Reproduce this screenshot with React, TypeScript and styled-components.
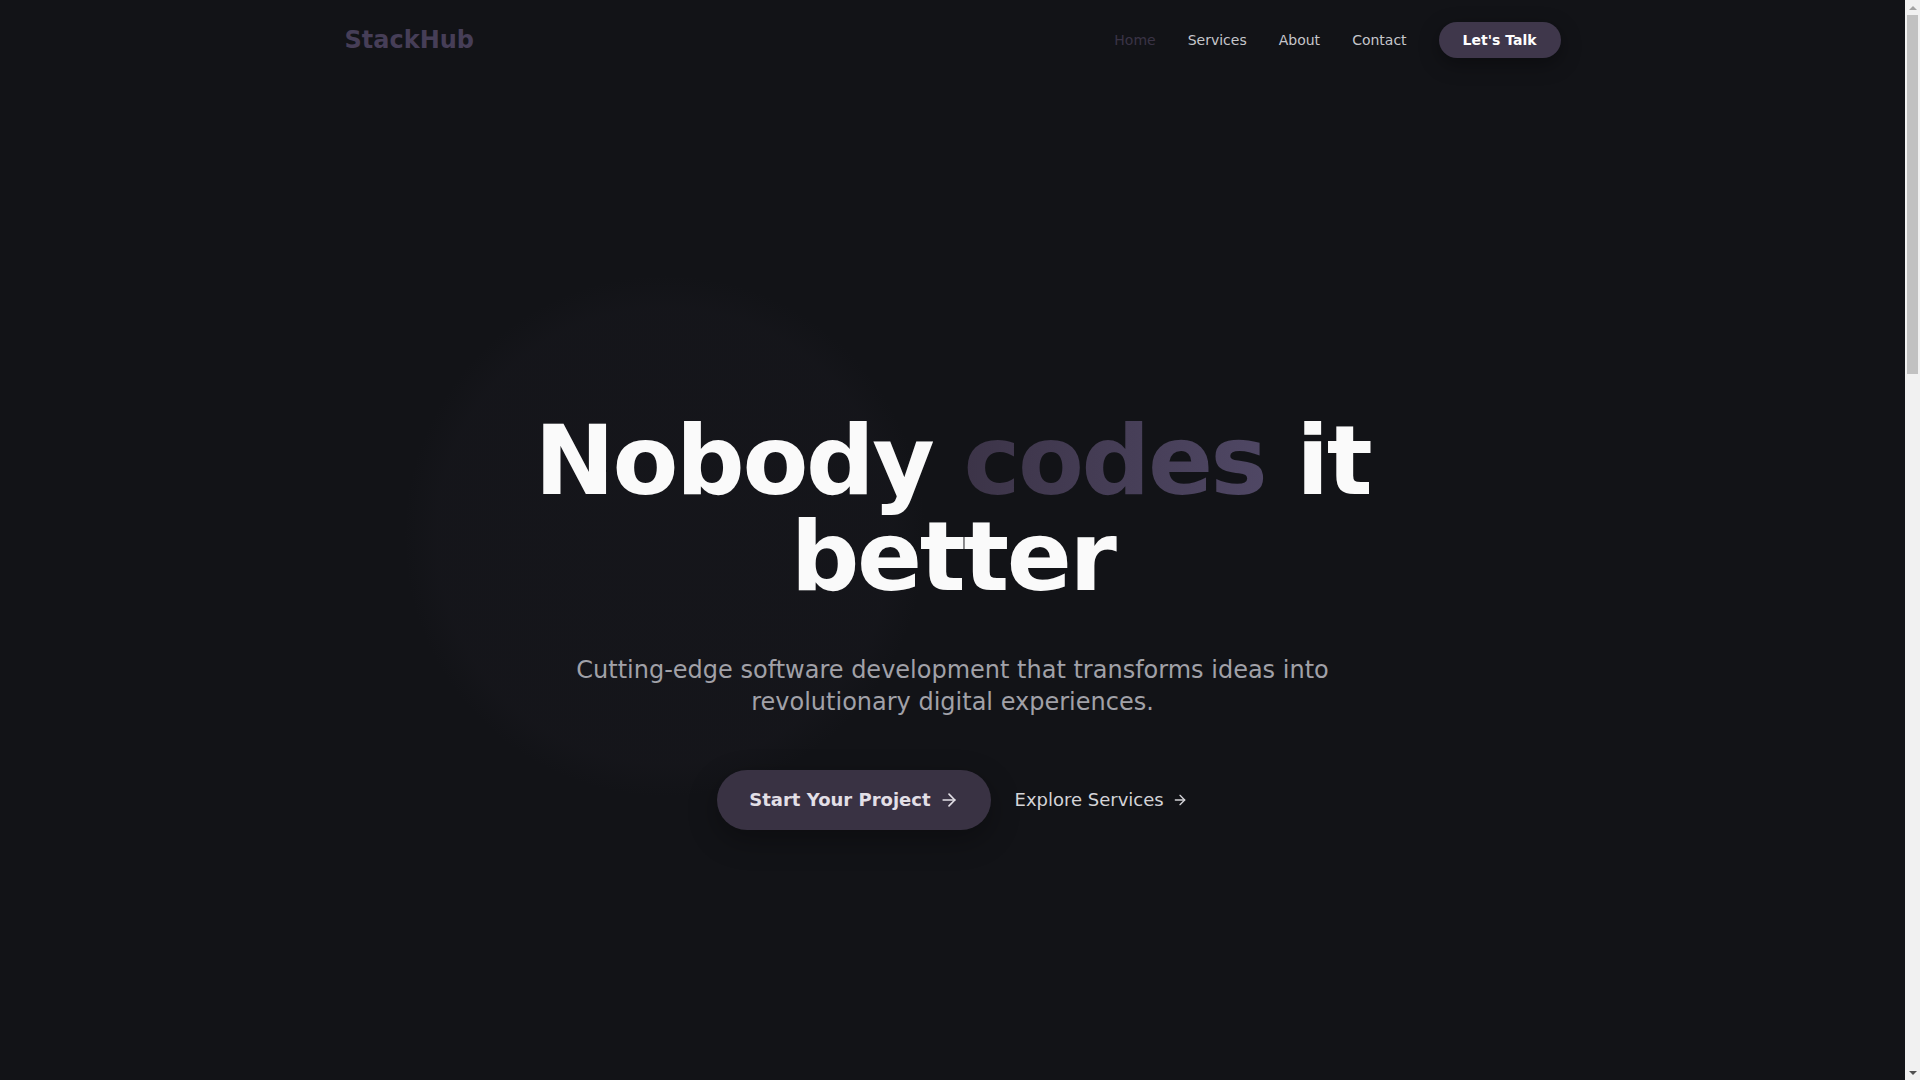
import { createGlobalStyle, styled } from 'styled-components'
import { ArrowRight, Code2, Smartphone, Cloud, Shield, Cpu, Layers } from 'lucide-react'

const GlobalStyle = createGlobalStyle`
  * { box-sizing: border-box; }
  html, body {
    margin: 0;
    padding: 0;
    background: #121317;
    color: #fafafa;
    font-family: "DejaVu Sans", Verdana, sans-serif;
  }
  a { color: inherit; text-decoration: none; }
  h1, h2, h3, p { margin: 0; }
`

const Shell = styled.div`
  display: flex;
  height: 100vh;
  overflow: hidden;
`

const Page = styled.main`
  flex: 1;
  min-width: 0;
  overflow-y: auto;
  background: #121317;
  scrollbar-width: none;
  &::-webkit-scrollbar { display: none; }
`

/* classic scrollbar rail, as the page shows it */
const Rail = styled.div`
  width: 15px;
  flex-shrink: 0;
  background: #f1f1f1;
  display: flex;
  flex-direction: column;
`

const RailButton = styled.div<{ $down?: boolean }>`
  height: 15px;
  display: flex;
  align-items: center;
  justify-content: center;
  &::after {
    content: '';
    width: 0;
    height: 0;
    border-left: 4px solid transparent;
    border-right: 4px solid transparent;
    ${({ $down }) =>
      $down ? 'border-top: 4px solid #505050;' : 'border-bottom: 4px solid #a3a3a3;'}
  }
`

const RailTrack = styled.div`
  flex: 1;
  padding: 0 2px;
`

const RailThumb = styled.div`
  height: 359px;
  background: #c1c1c1;
`

const Container = styled.div`
  max-width: 1280px;
  margin-inline: auto;
  padding: 0 2rem;
`

const NavBar = styled.nav`
  height: 80px;
  position: relative;
  z-index: 2;
  & > ${Container} {
    height: 100%;
    display: flex;
    justify-content: space-between;
    align-items: center;
  }
`

const Logo = styled.a`
  font-size: 24px;
  font-weight: 700;
  color: #463e57;
`

const NavLinks = styled.ul`
  display: flex;
  align-items: center;
  gap: 2rem;
  list-style: none;
  margin: 0;
  padding: 0;
`

const NavLink = styled.a<{ $active?: boolean }>`
  font-size: 14px;
  line-height: 20px;
  color: ${({ $active }) => ($active ? '#3a3346' : '#c6c6cb')};
`

const TalkButton = styled.a`
  display: inline-block;
  padding: 8px 24px;
  border-radius: 9999px;
  background: #3f374b;
  color: #ffffff;
  font-size: 14px;
  line-height: 20px;
  font-weight: 700;
  box-shadow: 0 6px 20px rgba(0, 0, 0, 0.35);
`

const Hero = styled.section`
  position: relative;
  min-height: 1080px;
  display: flex;
  align-items: center;
  justify-content: center;
  overflow: hidden;
`

const Glow = styled.div`
  position: absolute;
  left: 405px;
  top: 196px;
  width: 520px;
  height: 520px;
  border-radius: 50%;
  background: radial-gradient(circle, rgba(70, 62, 84, 0.06) 0%, rgba(70, 62, 84, 0.05) 62%, rgba(70, 62, 84, 0) 71%);
  pointer-events: none;
`

const HeroContent = styled.div`
  position: relative;
  display: flex;
  flex-direction: column;
  align-items: center;
  text-align: center;
  margin-top: 3px;
`

const Title = styled.h1`
  max-width: 1024px;
  font-size: 96px;
  line-height: 1;
  font-weight: 700;
  letter-spacing: -0.025em;
  color: #fafafa;
`

const Accent = styled.span`
  background: linear-gradient(90deg, #3c3448, #4f4764);
  -webkit-background-clip: text;
  background-clip: text;
  color: transparent;
`

const Lead = styled.p`
  max-width: 768px;
  margin-top: 49px;
  font-size: 24px;
  line-height: 32px;
  color: #a1a1a8;
`

const Actions = styled.div`
  margin-top: 52px;
  display: flex;
  align-items: center;
  gap: 24px;
`

const PrimaryButton = styled.a`
  display: inline-flex;
  align-items: center;
  gap: 8px;
  padding: 16px 32px;
  border-radius: 9999px;
  background: #393243;
  color: #e2dfe6;
  font-size: 18px;
  line-height: 28px;
  font-weight: 700;
  box-shadow: 0 10px 30px rgba(0, 0, 0, 0.3);
`

const GhostButton = styled.a`
  display: inline-flex;
  align-items: center;
  gap: 8px;
  font-size: 18px;
  line-height: 28px;
  color: #d4d4d8;
`

const Section = styled.section<{ $pad?: number }>`
  padding: ${({ $pad }) => $pad ?? 96}px 0;
`

const SectionHead = styled.div`
  text-align: center;
  margin-bottom: 64px;
  h2 {
    font-size: 48px;
    line-height: 56px;
    letter-spacing: -0.025em;
  }
  p {
    margin-top: 16px;
    font-size: 20px;
    line-height: 28px;
    color: #a1a1a8;
  }
`

const CardGrid = styled.div`
  display: grid;
  grid-template-columns: repeat(3, 1fr);
  gap: 32px;
`

const Card = styled.div`
  padding: 40px;
  min-height: 280px;
  border-radius: 24px;
  background: #18191f;
  border: 1px solid #22232a;
  h3 {
    margin-top: 24px;
    font-size: 22px;
    line-height: 30px;
  }
  p {
    margin-top: 12px;
    font-size: 16px;
    line-height: 26px;
    color: #a1a1a8;
  }
`

const IconBox = styled.div`
  width: 56px;
  height: 56px;
  border-radius: 16px;
  background: #2a2433;
  color: #8f84a3;
  display: flex;
  align-items: center;
  justify-content: center;
`

const Stats = styled.div`
  display: grid;
  grid-template-columns: repeat(4, 1fr);
  gap: 32px;
  text-align: center;
  strong {
    display: block;
    font-size: 56px;
    line-height: 64px;
    color: #4f4764;
  }
  span {
    font-size: 16px;
    color: #a1a1a8;
  }
`

const ContactBox = styled.div`
  padding: 72px;
  border-radius: 32px;
  background: #18191f;
  text-align: center;
  h2 {
    font-size: 44px;
    line-height: 52px;
  }
  p {
    margin: 16px 0 32px;
    font-size: 20px;
    color: #a1a1a8;
  }
`

const Footer = styled.footer`
  border-top: 1px solid #1f2026;
  padding: 36px 0;
  font-size: 14px;
  color: #71717a;
  & > ${Container} {
    display: flex;
    justify-content: space-between;
  }
`

const services = [
  { icon: Code2, title: 'Web Development', text: 'Fast, scalable web applications built with modern frameworks and clean architecture.' },
  { icon: Smartphone, title: 'Mobile Apps', text: 'Native and cross-platform apps that feel great on every device.' },
  { icon: Cloud, title: 'Cloud Solutions', text: 'Reliable infrastructure, deployment pipelines and serverless backends.' },
  { icon: Shield, title: 'Security', text: 'Audits, hardening and best practices to keep your product safe.' },
  { icon: Cpu, title: 'AI Integration', text: 'Smart features powered by machine learning and modern AI models.' },
  { icon: Layers, title: 'UI/UX Design', text: 'Interfaces people love to use, designed around real user needs.' },
]

export default function App() {
  return (
    <Shell>
      <GlobalStyle />
      <Page>
        <NavBar>
          <Container>
            <Logo href="#">StackHub</Logo>
            <NavLinks>
              <li><NavLink href="#" $active>Home</NavLink></li>
              <li><NavLink href="#">Services</NavLink></li>
              <li><NavLink href="#">About</NavLink></li>
              <li><NavLink href="#">Contact</NavLink></li>
              <li><TalkButton href="#">Let's Talk</TalkButton></li>
            </NavLinks>
          </Container>
        </NavBar>

        <Hero>
          <Glow />
          <HeroContent>
            <Title>
              Nobody <Accent>codes</Accent> it better
            </Title>
            <Lead>
              Cutting-edge software development that transforms ideas into revolutionary digital experiences.
            </Lead>
            <Actions>
              <PrimaryButton href="#">
                Start Your Project <ArrowRight size={20} strokeWidth={2} />
              </PrimaryButton>
              <GhostButton href="#">
                Explore Services <ArrowRight size={16} strokeWidth={2} />
              </GhostButton>
            </Actions>
          </HeroContent>
        </Hero>

        <Section>
          <Container>
            <SectionHead>
              <h2>What we build</h2>
              <p>End-to-end services for teams that want to ship faster.</p>
            </SectionHead>
            <CardGrid>
              {services.map(({ icon: Icon, title, text }) => (
                <Card key={title}>
                  <IconBox><Icon size={28} /></IconBox>
                  <h3>{title}</h3>
                  <p>{text}</p>
                </Card>
              ))}
            </CardGrid>
          </Container>
        </Section>

        <Section>
          <Container>
            <SectionHead>
              <h2>About StackHub</h2>
              <p>A small team of engineers and designers obsessed with quality.</p>
            </SectionHead>
            <Stats>
              <div><strong>250+</strong><span>Projects shipped</span></div>
              <div><strong>12</strong><span>Years of experience</span></div>
              <div><strong>98%</strong><span>Client retention</span></div>
              <div><strong>24/7</strong><span>Support</span></div>
            </Stats>
          </Container>
        </Section>

        <Section>
          <Container>
            <ContactBox>
              <h2>Ready to start?</h2>
              <p>Tell us about your idea and we'll get back within a day.</p>
              <PrimaryButton href="#">
                Let's Talk <ArrowRight size={20} />
              </PrimaryButton>
            </ContactBox>
          </Container>
        </Section>

        <Footer>
          <Container>
            <span>© 2024 StackHub. All rights reserved.</span>
            <span>Privacy · Terms</span>
          </Container>
        </Footer>
      </Page>
      <Rail aria-hidden>
        <RailButton />
        <RailTrack>
          <RailThumb />
        </RailTrack>
        <RailButton $down />
      </Rail>
    </Shell>
  )
}
